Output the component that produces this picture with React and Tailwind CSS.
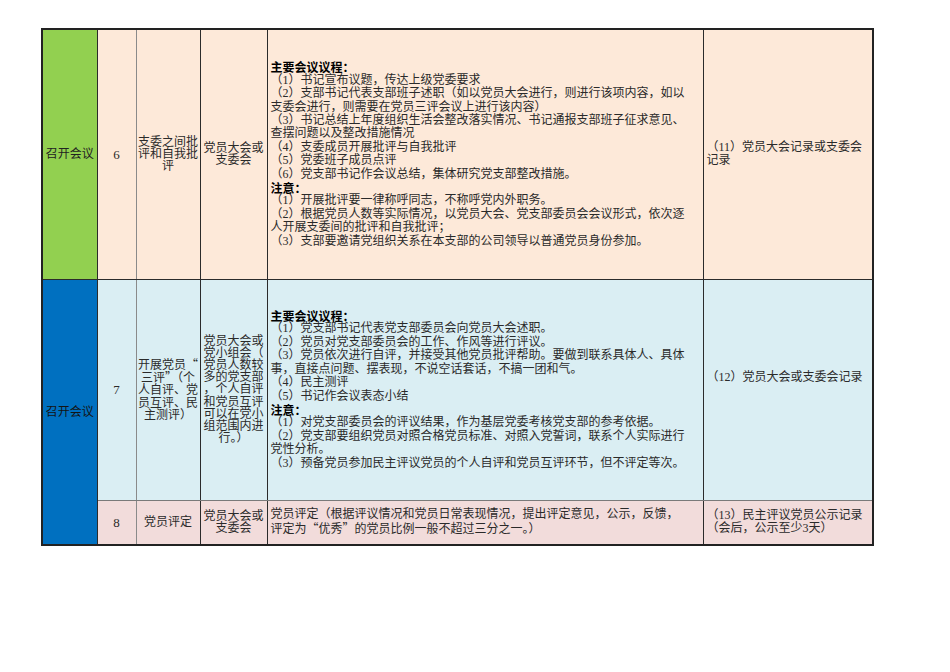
import React from 'react';

// Rows of the 召开会议 stage table
const rows = [
  {
    no: '6',
    name: ['支委之间批', '评和自我批', '评'],
    form: ['党员大会或', '支委会'],
    body: [
      { b: true, t: '主要会议议程：' },
      { t: '（1）书记宣布议题，传达上级党委要求' },
      { t: '（2）支部书记代表支部班子述职（如以党员大会进行，则进行该项内容，如以' },
      { t: '支委会进行，则需要在党员三评会议上进行该内容）' },
      { t: '（3）书记总结上年度组织生活会整改落实情况、书记通报支部班子征求意见、' },
      { t: '查摆问题以及整改措施情况' },
      { t: '（4）支委成员开展批评与自我批评' },
      { t: '（5）党委班子成员点评' },
      { t: '（6）党支部书记作会议总结，集体研究党支部整改措施。' },
      { b: true, t: '注意：' },
      { t: '（1）开展批评要一律称呼同志，不称呼党内外职务。' },
      { t: '（2）根据党员人数等实际情况，以党员大会、党支部委员会会议形式，依次逐' },
      { t: '人开展支委间的批评和自我批评；' },
      { t: '（3）支部要邀请党组织关系在本支部的公司领导以普通党员身份参加。' },
    ],
    record: ['（11）党员大会记录或支委会', '记录'],
    recPad: '',
    bg: 'bg-[#fde9d9]',
    h: 'h-[250px]',
  },
  {
    no: '7',
    name: ['开展党员“', '三评”（个', '人自评、党', '员互评、民', '主测评）'],
    form: ['党员大会或', '党小组会（', '党员人数较', '多的党支部', '，个人自评', '和党员互评', '可以在党小', '组范围内进', '行。）'],
    body: [
      { b: true, t: '主要会议议程：' },
      { t: '（1）党支部书记代表党支部委员会向党员大会述职。' },
      { t: '（2）党员对党支部委员会的工作、作风等进行评议。' },
      { t: '（3）党员依次进行自评，并接受其他党员批评帮助。要做到联系具体人、具体' },
      { t: '事，直接点问题、摆表现，不说空话套话，不搞一团和气。' },
      { t: '（4）民主测评' },
      { t: '（5）书记作会议表态小结' },
      { b: true, t: '注意：' },
      { t: '（1）对党支部委员会的评议结果，作为基层党委考核党支部的参考依据。' },
      { t: '（2）党支部要组织党员对照合格党员标准、对照入党誓词，联系个人实际进行' },
      { t: '党性分析。' },
      { t: '（3）预备党员参加民主评议党员的个人自评和党员互评环节，但不评定等次。' },
    ],
    record: ['（12）党员大会或支委会记录'],
    recPad: 'pb-[24px]',
    bg: 'bg-[#daeef3]',
    h: 'h-[221px]',
  },
  {
    no: '8',
    name: ['党员评定'],
    form: ['党员大会或', '支委会'],
    body: [
      { t: '党员评定（根据评议情况和党员日常表现情况，提出评定意见，公示，反馈，' },
      { t: '评定为“优秀”的党员比例一般不超过三分之一。）' },
    ],
    record: ['（13）民主评议党员公示记录', '（会后，公示至少3天）'],
    recPad: '',
    bg: 'bg-[#f2dcdb]',
    h: 'h-[45px]',
  },
];

// swap curly quotes to the CJK face so they take full width
function Txt({ s }) {
  const parts = s.split(/([“”])/);
  return parts.map((p, i) =>
    p === '“' || p === '”' ? (
      <span key={i} className="font-['Noto_Sans_CJK_SC',sans-serif]">{p}</span>
    ) : (
      <React.Fragment key={i}>{p}</React.Fragment>
    )
  );
}

const cell = 'border border-[#2b2b2b] p-0 align-middle';

export default function App() {
  return (
    <div className="w-[950px] h-[672px] bg-white pt-[28px] pl-[41px] font-['Liberation_Serif','Noto_Sans_CJK_SC',serif] text-[12px] text-[#2a2a2a]">
      <table className="table-fixed border-collapse border-2 border-[#222] w-[831px]">
        <colgroup>
          <col className="w-[55px]" />
          <col className="w-[39px]" />
          <col className="w-[64px]" />
          <col className="w-[67px]" />
          <col className="w-[436px]" />
          <col className="w-[170px]" />
        </colgroup>
        <tbody>
          {rows.map((r, i) => {
            const sep = `${i === 1 ? 'border-b-[#7a7a7a]' : ''} ${i === 2 ? 'border-t-[#7a7a7a]' : ''}`;
            return (
              <tr key={r.no} className={r.h}>
                {i === 0 && (
                  <td className={`${cell} bg-[#92d050] text-center text-[#222]`}>召开会议</td>
                )}
                {i === 1 && (
                  <td rowSpan={2} className={`${cell} bg-[#0070c0] text-center text-[#141414]`}>
                    召开会议
                  </td>
                )}
                <td className={`${cell} ${r.bg} ${sep} text-center text-[13px] border-r-[#8a8a8a]`}>
                  {r.no}
                </td>
                <td className={`${cell} ${r.bg} ${sep} text-center leading-[12.3px] border-l-[#8a8a8a]`}>
                  {r.name.map((l, k) => (
                    <div key={k} className="whitespace-nowrap">
                      <Txt s={l} />
                    </div>
                  ))}
                </td>
                <td className={`${cell} ${r.bg} ${sep} text-center leading-[12.2px]`}>
                  {r.form.map((l, k) => (
                    <div key={k} className="whitespace-nowrap">
                      {l}
                    </div>
                  ))}
                </td>
                <td
                  className={`${cell} ${r.bg} ${sep} px-[3px] ${
                    i === 2 ? 'leading-[13px]' : 'leading-[13.4px]'
                  }`}
                >
                  {r.body.map((l, k) => (
                    <div
                      key={k}
                      className={`whitespace-nowrap ${
                        l.b ? "font-bold text-black font-['Noto_Sans_CJK_SC',sans-serif]" : ''
                      }`}
                    >
                      <Txt s={l.t} />
                    </div>
                  ))}
                </td>
                <td className={`${cell} ${r.bg} ${sep} px-[3px] leading-[13px] ${r.recPad}`}>
                  {r.record.map((l, k) => (
                    <div key={k} className="whitespace-nowrap">
                      {l}
                    </div>
                  ))}
                </td>
              </tr>
            );
          })}
        </tbody>
      </table>
    </div>
  );
}
